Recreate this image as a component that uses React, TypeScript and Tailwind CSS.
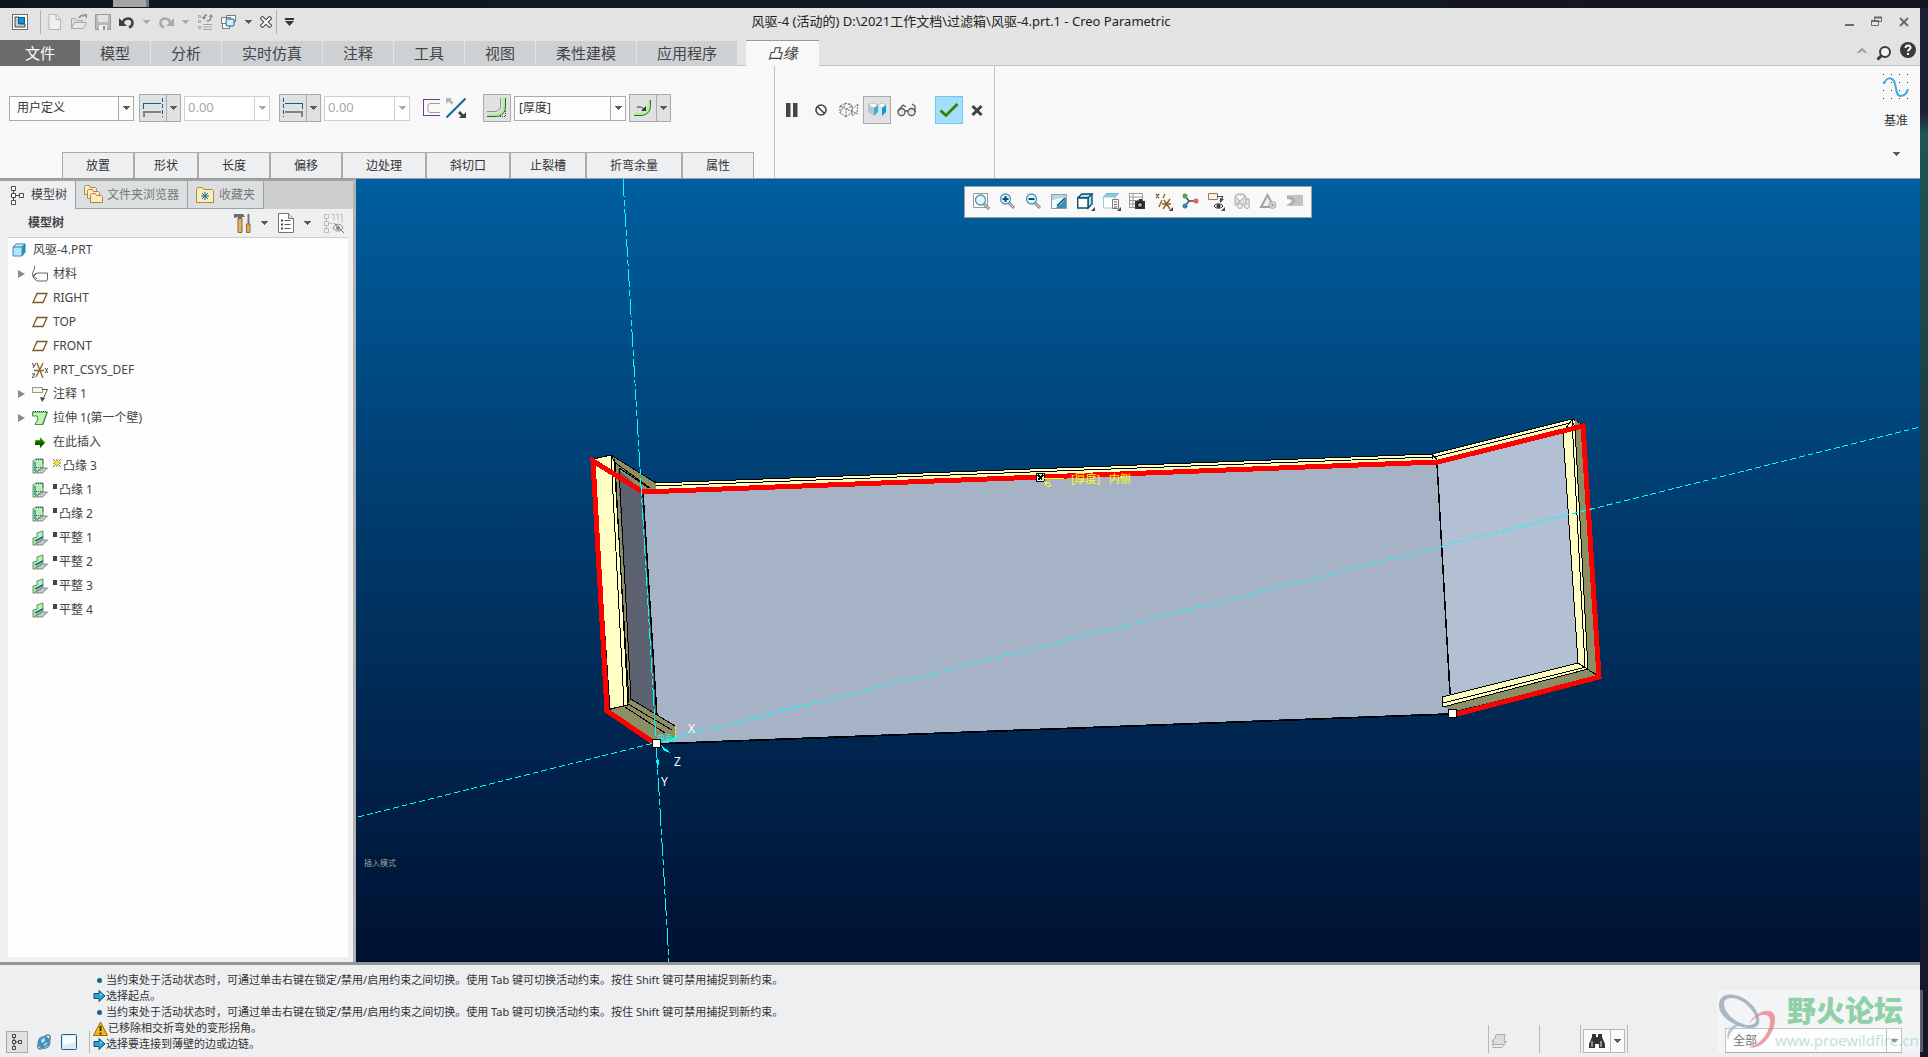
import { useState } from 'react'
import type { ReactNode } from 'react'

type No = {
  nome: string
  icone: ReactNode
  filho?: boolean
  expande?: boolean
  marca?: 'novo' | 'quadrado'
}

function Seta({ className = 'text-[#5a5a5a]' }: { className?: string }) {
  return (
    <svg width="7" height="4" viewBox="0 0 7 4" className={className} shapeRendering="crispEdges">
      <path d="M0 0h7L3.5 4z" fill="currentColor" />
    </svg>
  )
}

function Icone({ children, w = 16, h = 16 }: { children: ReactNode; w?: number; h?: number }) {
  return (
    <svg width={w} height={h} viewBox={`0 0 ${w} ${h}`} fill="none" className="shrink-0">
      {children}
    </svg>
  )
}

/* Quick access icons */
const IconeApp = () => (
  <Icone>
    <rect x="0.5" y="0.5" width="15" height="15" fill="#fff" stroke="#6d6d6d" />
    <path d="M3 3h4v7h6v3H3z" fill="#c8ccd0" stroke="#444" />
    <rect x="6.5" y="3.5" width="6" height="6" fill="#0096e0" stroke="#0f5f8e" />
  </Icone>
)
const IconeNovo = () => (
  <Icone>
    <path d="M2 .5h7l4.500 5V15.500H2z" fill="#efefef" stroke="#b5b5b5" />
    <path d="M9 .5v5h4.500" stroke="#b5b5b5" />
  </Icone>
)
const IconeAbrir = () => (
  <Icone>
    <path d="M.5 14.500V4.500h4l1 2h6v3" fill="#dcdcdc" stroke="#a8a8a8" />
    <path d="M.5 14.500l3-6h12l-3 6z" fill="#e8e8e8" stroke="#a8a8a8" />
    <path d="M8 4c1-2 3-3 5-2" stroke="#999" strokeWidth="2" />
    <path d="M12 0h4v5z" fill="#999" />
  </Icone>
)
const IconeSalvar = () => (
  <Icone>
    <path d="M.5 .5h15v15h-15z" fill="#b9b9b9" stroke="#9b9b9b" />
    <path d="M3 1h10v7H3z" fill="#e2e2e2" />
    <path d="M4 11h8v5H4z" fill="#efefef" />
    <path d="M8 12h2v4H8z" fill="#8f8f8f" />
  </Icone>
)
const IconeDesfazer = () => (
  <Icone>
    <path d="M3.500 9.500C5 3 13.500 3 13.500 9c0 2-1 3.500-3.500 4.500" stroke="#3d3f44" strokeWidth="2.600" />
    <path d="M0 4v8h8z" fill="#3d3f44" />
  </Icone>
)
const IconeRefazer = () => (
  <Icone>
    <path d="M12.500 9.500C11 3 2.500 3 2.500 9c0 2 1 3.500 3.500 4.500" stroke="#a9a9a9" strokeWidth="2.600" />
    <path d="M16 4v8H8z" fill="#a9a9a9" />
  </Icone>
)
const IconeRegenerar = () => (
  <Icone>
    <path d="M1.500 1.500h2v2h-2zM1.500 6.500h2v2h-2zM1.500 12.500h2v2h-2zM6 10.500h9M6 13h9M6 15.500h9" stroke="#a5a5a5" />
    <path d="M7 4c0-2 1-3 3-3M14 2c0 3-1 5-4 5" stroke="#8b8b8b" strokeWidth="1.500" />
    <path d="M4.500 3h5L7 6zM11.500 3h5L14 0z" fill="#8b8b8b" />
  </Icone>
)
const IconeJanelas = () => (
  <Icone>
    <path d="M5.500 1.500h9v6h-9zM.5 3.500h9v6h-9zM1.500 9.500h7v5h-7z" fill="#fff" stroke="#777" />
    <rect x="5" y="5" width="8" height="7" rx="1" fill="#cdeefa" stroke="#16647f" />
  </Icone>
)
const IconeFechar = () => (
  <Icone w={12} h={12}>
    <path d="M2.500 2.500l7 7M9.500 2.500l-7 7" stroke="#444" strokeWidth="4.200" strokeLinecap="square" />
    <path d="M2.500 2.500l7 7M9.500 2.500l-7 7" stroke="#fff" strokeWidth="2.200" strokeLinecap="square" />
  </Icone>
)

/* Feature dashboard icons */
const IconeExtremo = ({ espelhado = false }: { espelhado?: boolean }) => (
  <Icone w={22} h={22}>
    <g transform={espelhado ? 'translate(22 0) scale(-1 1)' : undefined} shapeRendering="crispEdges">
      <path d="M1.500 12V6.500H19" stroke="#0e6285" />
      <path d="M20.500 1v19" stroke="#0e6285" strokeDasharray="4 2" />
      <path d="M2 20v-5.500h17" stroke="#808285" strokeWidth="2" />
    </g>
  </Icone>
)
const IconePerfil = () => (
  <Icone w={18} h={18}>
    <path d="M17 .5H.5v16H17" stroke="#6f3f98" shapeRendering="crispEdges" />
    <path d="M17 4.500H7l-2 1v7l2 1h10" stroke="#a0a0a0" />
  </Icone>
)
const IconeInverter = () => (
  <Icone w={20} h={20}>
    <path d="M.5 19.500L19.500.5" stroke="#126a8e" strokeWidth="2" />
    <path d="M0 0h6L4.500 1.500l3 3-2 2-3-3L0 6z" fill="#b4b4b4" />
    <path d="M20 20h-7l2-2-3-3 2-2 3.500 3.500L20 14z" fill="#3f4145" />
  </Icone>
)
const IconeDobra = () => (
  <Icone w={20} h={20}>
    <path d="M0 17h8c6 0 9-3 9-9V0" stroke="#b7e8a6" strokeWidth="3" />
    <path d="M0 18.500h8c7 0 10.500-4 10.500-10.500V0" stroke="#24720f" />
    <path d="M0 13.500h7c4 0 6.500-2 6.500-6V0" stroke="#8c8c8c" />
    <path d="M13 18.500h6M18.500 13v6" stroke="#0e4a78" strokeDasharray="1 1" />
  </Icone>
)
const IconeRaio = () => (
  <Icone w={18} h={18}>
    <path d="M0 15h6c6 0 9-3 9-9V1" stroke="#b7e8a6" strokeWidth="3" />
    <path d="M0 16.500h6c7 0 10.500-4 10.500-10V1" stroke="#24720f" />
    <path d="M3 8h4l4 3" stroke="#333" />
    <path d="M12 7v5H7z" fill="#333" />
  </Icone>
)
const IconeArame = () => (
  <Icone w={20} h={16}>
    <path d="M1 4l6-3 6 3-5 3zM1 4v7l6 4V7M13 4v6l-6 5M19 2l-6 5v7l5-4zM7 1L1 11M10 1l4 5M19 12L7 7" stroke="#6b6b6b" strokeDasharray="2 1" />
  </Icone>
)
const IconeBlocos = () => (
  <Icone w={20} h={16}>
    <path d="M1 3l5-2 5 2-4 3z" fill="#fff" stroke="#999" strokeWidth=".5" />
    <path d="M1 3l6 3v8l-6-4z" fill="#b5c8d2" />
    <path d="M7 6l4-3v7l-4 4z" fill="#35aee2" />
    <path d="M11 3l4-2 4 2-4 3z" fill="#fff" stroke="#999" strokeWidth=".5" />
    <path d="M11 3l4 3v8l-4-4z" fill="#d8e4ea" />
    <path d="M15 6l4-3v7l-4 4z" fill="#0f9ad6" />
  </Icone>
)
const IconeOculos = () => (
  <Icone w={20} h={14}>
    <circle cx="4.500" cy="9" r="3.500" fill="#e3edf1" stroke="#55585c" strokeWidth="1.300" />
    <circle cx="14.500" cy="9" r="3.500" fill="#e3edf1" stroke="#55585c" strokeWidth="1.300" />
    <path d="M8 8.500c1-1 2-1 3 0M1 8l5-6 3 2M18 9V3l-3-2" stroke="#55585c" strokeWidth="1.300" />
  </Icone>
)
const IconeCurva = () => (
  <Icone w={26} h={26}>
    {[0, 8, 16, 24].map((y) => (
      <path key={y} d={`M0 ${y + 0.5}h26`} stroke="#333" strokeDasharray="1 7" shapeRendering="crispEdges" />
    ))}
    <path d="M1 10c2-7 9-8 11 0 2 7 1 11 5 12 4 0 7-3 8-7" stroke="#3fa9dc" strokeWidth="2" />
  </Icone>
)

/* Model tree icons */
const IconeArvore = () => (
  <Icone w={14} h={20}>
    <path d="M.5 1.500h4v4h-4zM.5 8.500h4v4h-4zM.5 15.500h4v4h-4zM8.500 8.500h4v4h-4z" fill="#fff" stroke="#4a4a4a" />
    <path d="M2.500 5.500v3M2.500 12.500v3M4.500 10.500h4" stroke="#4a4a4a" />
  </Icone>
)
const IconePastas = () => (
  <Icone w={20} h={20}>
    {[[0, 0], [3, 4], [6, 8]].map(([x, y]) => (
      <path key={x} d={`M${x + 0.5} ${y + 9.5}v-8l1-1h4l1 2h5l1 1v6z`} fill="#fdebc0" stroke="#b08847" />
    ))}
  </Icone>
)
const IconeFavoritos = () => (
  <Icone w={18} h={16}>
    <path d="M.5 15.500v-13l1-2h5l1 2h9l1 1v12z" fill="#fdebc0" stroke="#b08847" />
    <path d="M9 5v8M5 9h8M6 6l6 6M12 6l-6 6" stroke="#0a6a94" />
  </Icone>
)
const IconePeca = () => (
  <Icone w={14} h={14}>
    <path d="M1 4l3-3h9l-3 3z" fill="#d9f6ff" stroke="#287fa3" />
    <path d="M10 4l3-3v8l-3 4z" fill="#1c94c9" stroke="#287fa3" />
    <path d="M1 4h9v9H1z" fill="#aee6fa" stroke="#3b93b5" />
  </Icone>
)
const IconeMaterial = () => (
  <Icone>
    <path d="M2.500 0c1 3-2 5-2 8 0 4 3 6 5 7h9l1-2V7H5L2 10" stroke="#666" />
    <path d="M4 7l-3 3 4 3" stroke="#666" />
  </Icone>
)
const IconePlano = () => (
  <Icone>
    <path d="M5 3.500h10l-4 9H1z" fill="#fffdf4" stroke="#76592a" strokeWidth="1.300" />
  </Icone>
)
const IconeCsys = () => (
  <Icone>
    <path d="M2 8.500h10M5 1l6 15M11 1L4 15" stroke="#8f6b2d" strokeWidth="1.400" />
    <path d="M0 1l2 3M4 1L1 6M0 12h3l-3 4h3M13 6l3 5M16 6l-3 5" stroke="#444" />
  </Icone>
)
const IconeNota = () => (
  <Icone>
    <path d="M.5 1.500h10v5H.5z" fill="#fff3d9" stroke="#979797" />
    <path d="M10 3.500h5.500L11 13" stroke="#555" />
    <path d="M8 11l5 1-3 4z" fill="#444" />
  </Icone>
)
const IconeParede = () => (
  <Icone>
    <path d="M.5 2h15l-4.500 12.500H3L6 9l-1-3H.5z" fill="#bff2ac" stroke="#4a8a42" />
    <path d="M1 1.500h14M15 2l-4.500 12" stroke="#0e4a78" strokeDasharray="1 1" />
  </Icone>
)
const IconeInserir = () => (
  <Icone>
    <path d="M3 6h5V3l5 5.500L8 14v-3H3z" fill="#067a0b" stroke="#d8ee3a" strokeWidth=".6" />
    <path d="M3 8.500h10L8 14v-3H3z" fill="#155011" />
  </Icone>
)
const IconeFlange = () => (
  <Icone>
    <path d="M1 3l3-2h7v9l-7 3-1 2H1z" fill="#b9efb0" stroke="#5e9166" />
    <path d="M3 4v9" stroke="#3386ae" strokeWidth="1.500" />
    <path d="M4 1.500h7v4M4 9.500h7" stroke="#0e4a78" strokeDasharray="1 1" />
    <path d="M4 14l7-4h4.500l-5 5H4z" fill="#c9c9c9" stroke="#858585" />
  </Icone>
)
const IconePlana = () => (
  <Icone>
    <path d="M1 8l4-1V3l6-2v8l-7 4-1 2H1z" fill="#b9efb0" stroke="#5e9166" />
    <path d="M3 11l8-4" stroke="#14618c" strokeWidth="1.400" />
    <path d="M4 14l7-4h4.500l-5 5H4z" fill="#c9c9c9" stroke="#858585" />
  </Icone>
)
const IconeFerramentas = () => (
  <Icone w={18} h={20}>
    <path d="M4 5h4v14.500H4z" fill="#e3b066" stroke="#8c6932" />
    <path d="M0 1h9l2 3H8v2H4V4L0 5z" fill="#6a6d71" />
    <path d="M14.500 1v10" stroke="#777" strokeWidth="2" />
    <path d="M12.500 11h3.500v8.500h-3.500z" fill="#e3b066" stroke="#8c6932" />
  </Icone>
)
const IconeLista = () => (
  <Icone w={18} h={20}>
    <path d="M1.500.5h10l5 5v14h-15z" fill="#fff" stroke="#777" />
    <path d="M11.500.5v5h5" fill="#ddd" stroke="#777" />
    <path d="M4 7.500h2M4 11.500h2M4 15.500h2" stroke="#444" strokeWidth="2" />
    <path d="M7.500 7.500h6M7.500 11.500h6M7.500 15.500h6" stroke="#557" />
  </Icone>
)
const IconeOcultar = () => (
  <Icone w={20} h={20}>
    <path d="M.5 1.500h4v4h-4zM.5 8.500h4v4h-4zM.5 15.500h4v4h-4zM2.500 5.500v3M2.500 12.500v3M4.500 10.500h4M7 1.500h3v6M12 1.500h2v6M16 1.500h2v8" stroke="#bcbcbc" />
    <path d="M9 15c3-5 8-5 10 0-3 4-7 4-10 0z" fill="#eee" stroke="#8b8b8b" />
    <circle cx="14" cy="15" r="2" fill="#8b8b8b" />
    <path d="M10 10l10 10" stroke="#777" />
  </Icone>
)

const Canto = () => <path d="M18 14v4h-4z" fill="#444" />

const LupaBase = ({ sinal }: { sinal?: string }) => (
  <>
    <path d="M10 10l5 5" stroke="#8a8a8a" strokeWidth="3" />
    <path d="M10.500 10.500l4 4" stroke="#e6e6e6" />
    <circle cx="6.500" cy="6" r="5" fill="#e4f5fb" stroke="#4c98b8" strokeWidth="1.300" />
    {sinal && <path d={sinal} stroke="#0b4f76" strokeWidth="2" />}
  </>
)

const ferramentasVista: { nome: string; desenho: ReactNode }[] = [
  { nome: '重新调整', desenho: <><path d="M.5.5h14v14H.5z" fill="#fff" stroke="#999" /><g transform="translate(1 1)"><LupaBase /></g></> },
  { nome: '放大', desenho: <LupaBase sinal="M3.500 6h6M6.500 3v6" /> },
  { nome: '缩小', desenho: <LupaBase sinal="M3.500 6h6" /> },
  { nome: '重画', desenho: <><path d="M.5 1.500h15v14H.5z" fill="#fdfefe" stroke="#999" /><path d="M1 2h14v3C9 6 8 10 4 15H1V7z" fill="#a9dcef" /><path d="M15 5v10H4l6-4z" fill="#3a8fb5" /><path d="M1 15h4L14 5C9 5 3 6 1 8z" fill="#f4fbfe" /><path d="M6 13l8-8" stroke="#0c4463" strokeWidth="1.500" /></> },
  { nome: '显示样式', desenho: <><path d="M.7 5l4-4H15l-4 4zM11 5l4-4v10l-4 4z" fill="#a9e2f4" stroke="#0b4f6e" strokeWidth="1.400" /><path d="M.7 5H11v10H.7z" fill="#fff" stroke="#0b4f6e" strokeWidth="1.400" /><Canto /></> },
  { nome: '已保存方向', desenho: <><path d="M.5 4l3-3.500h12L12 4z" fill="#7fcdea" stroke="#77b8cf" /><path d="M.5 4H12v11H.5z" fill="#fff" stroke="#a2c6d3" /><path d="M9.500 6.500h6v9h-6z" fill="#fff" stroke="#777" /><path d="M11 9h3M11 11.500h3M11 14h3" stroke="#555" /><Canto /></> },
  { nome: '视图管理器', desenho: <><path d="M.5.5h13v14H.5zM.5 4h13M.5 7.500h13M.5 11h13M4 0v14" fill="#fff" stroke="#999" /><path d="M6 8h3l1-2h3l1 2h2v8H6z" fill="#333" /><circle cx="11" cy="12" r="2.500" fill="#aaa" stroke="#000" /></> },
  { nome: '基准显示过滤器', desenho: <><path d="M1 1l3 4M4 1L1 5M10 1L8 5M7 7L4 14M7 11h9M9 7l6 9M15 6L8 16" stroke="#8a6423" strokeWidth="1.400" /><Canto /></> },
  { nome: '旋转中心', desenho: <><path d="M4 3l4 5M4 13l4-5M8 8h6" stroke="#444" strokeWidth="1.300" /><circle cx="4" cy="3" r="2.500" fill="#4ea15d" /><circle cx="4" cy="13" r="2.500" fill="#3186b2" /><circle cx="15" cy="8" r="2.500" fill="#e0605c" /></> },
  { nome: '注释显示', desenho: <><path d="M1.500.5h9v6h-9z" fill="#fff3d9" stroke="#8b7d63" /><path d="M10 3.500h6L13 8" stroke="#444" /><path d="M13 5l4 1-4 4z" fill="#444" /><path d="M7 13c2-3 7-3 9 0-2 3-7 3-9 0z" fill="#fff" stroke="#333" /><circle cx="11.500" cy="13" r="2" fill="#333" /><Canto /></> },
  { nome: '模拟查看', desenho: <><path d="M2 3l3-2h6l2 3v8H2zM2 3l5 5 5-5M4 11l3-3M13 6h3v6" fill="#ddd" stroke="#aaa" /><circle cx="7" cy="13" r="2.500" fill="#eee" stroke="#aaa" /><circle cx="14" cy="13" r="2.500" fill="#eee" stroke="#aaa" /></> },
  { nome: '分析显示', desenho: <><path d="M8.500 2L2 14h13z" fill="#eee" stroke="#a3a3a3" strokeWidth="2" /><circle cx="13.500" cy="12" r="3.500" fill="#ddd" stroke="#aaa" /><path d="M12.500 10v4l3-2z" fill="#999" /></> },
  { nome: '停止', desenho: <><path d="M2 2h16v11H2v-2c5 1 6-5 0-5z" fill="#c3c3c3" /><path d="M2 5c9-1 9 6 2 6" stroke="#a7a7a7" strokeWidth="2" /></> },
]

const abas = ['模型', '分析', '实时仿真', '注释', '工具', '视图', '柔性建模', '应用程序']

const subAbas = [
  { nome: '放置', classe: 'w-[72px]' },
  { nome: '形状', classe: 'w-16' },
  { nome: '长度', classe: 'w-[72px]' },
  { nome: '偏移', classe: 'w-[72px]' },
  { nome: '边处理', classe: 'w-[84px]' },
  { nome: '斜切口', classe: 'w-[84px]' },
  { nome: '止裂槽', classe: 'w-[76px]' },
  { nome: '折弯余量', classe: 'w-24' },
  { nome: '属性', classe: 'w-[72px]' },
]

const nos: No[] = [
  { nome: '风驱-4.PRT', icone: <IconePeca /> },
  { nome: '材料', icone: <IconeMaterial />, filho: true, expande: true },
  { nome: 'RIGHT', icone: <IconePlano />, filho: true },
  { nome: 'TOP', icone: <IconePlano />, filho: true },
  { nome: 'FRONT', icone: <IconePlano />, filho: true },
  { nome: 'PRT_CSYS_DEF', icone: <IconeCsys />, filho: true },
  { nome: '注释 1', icone: <IconeNota />, filho: true, expande: true },
  { nome: '拉伸 1(第一个壁)', icone: <IconeParede />, filho: true, expande: true },
  { nome: '在此插入', icone: <IconeInserir />, filho: true },
  { nome: '凸缘 3', icone: <IconeFlange />, filho: true, marca: 'novo' },
  { nome: '凸缘 1', icone: <IconeFlange />, filho: true, marca: 'quadrado' },
  { nome: '凸缘 2', icone: <IconeFlange />, filho: true, marca: 'quadrado' },
  { nome: '平整 1', icone: <IconePlana />, filho: true, marca: 'quadrado' },
  { nome: '平整 2', icone: <IconePlana />, filho: true, marca: 'quadrado' },
  { nome: '平整 3', icone: <IconePlana />, filho: true, marca: 'quadrado' },
  { nome: '平整 4', icone: <IconePlana />, filho: true, marca: 'quadrado' },
]

const dica = '当约束处于活动状态时，可通过单击右键在锁定/禁用/启用约束之间切换。使用 Tab 键可切换活动约束。按住 Shift 键可禁用捕捉到新约束。'

const mensagens: { tipo: 'info' | 'acao' | 'aviso'; texto: string }[] = [
  { tipo: 'info', texto: dica },
  { tipo: 'acao', texto: '选择起点。' },
  { tipo: 'info', texto: dica },
  { tipo: 'aviso', texto: '已移除相交折弯处的变形拐角。' },
  { tipo: 'acao', texto: '选择要连接到薄壁的边或边链。' },
]

function BarraTitulo() {
  return (
    <header className="flex h-8 items-center pb-1">
      <div className="flex flex-1 items-center pl-3">
        <button aria-label="Creo"><IconeApp /></button>
        <span className="mr-[6px] ml-3 h-6 w-px bg-[#b0b0b0]" />
        <div className="flex items-center gap-2">
          <button aria-label="新建"><IconeNovo /></button>
          <button aria-label="打开"><IconeAbrir /></button>
          <button aria-label="保存"><IconeSalvar /></button>
          <button aria-label="撤消"><IconeDesfazer /></button>
          <button aria-label="撤消列表"><Seta className="text-[#a9a9a9]" /></button>
          <button aria-label="重做"><IconeRefazer /></button>
          <button aria-label="重做列表"><Seta className="text-[#a9a9a9]" /></button>
          <button aria-label="重新生成"><IconeRegenerar /></button>
          <button aria-label="窗口"><IconeJanelas /></button>
          <button aria-label="窗口列表"><Seta /></button>
        </div>
        <button aria-label="关闭窗口" className="ml-2"><IconeFechar /></button>
        <span className="mx-1 h-6 w-px bg-[#b0b0b0]" />
        <button aria-label="自定义快速访问工具栏" className="ml-1">
          <Icone w={9} h={8}>
            <path d="M0 1h9" stroke="#333" strokeWidth="2" />
            <path d="M0 3h9L4.500 8z" fill="#333" />
          </Icone>
        </button>
      </div>
      <h1 className="text-[13px] text-[#222]">风驱-4 (活动的) D:\2021工作文档\过滤箱\风驱-4.prt.1 - Creo Parametric</h1>
      <div className="flex flex-1 items-center justify-end gap-[15px] pr-[10px]">
        <button aria-label="最小化">
          <Icone w={12} h={12}><path d="M1 9h9" stroke="#6b6b6b" strokeWidth="2" /></Icone>
        </button>
        <button aria-label="还原">
          <Icone w={12} h={12}>
            <path d="M3.500 4V1.500h7v4H8M.500 4.500h7v5H.500z" stroke="#6b6b6b" />
            <path d="M3 1.500h8M0 5h8" stroke="#6b6b6b" strokeWidth="2" />
          </Icone>
        </button>
        <button aria-label="关闭">
          <Icone w={12} h={12}><path d="M2 2l8 8M10 2l-8 8" stroke="#6b6b6b" strokeWidth="2" /></Icone>
        </button>
      </div>
    </header>
  )
}

function BarraAbas() {
  return (
    <nav className="flex h-[26px] items-stretch border-b border-[#c0c2c4] text-[15px] leading-[22px] text-[#444]">
      <button className="-mb-px w-20 bg-[#6b6b6b] pb-px text-white">文件</button>
      <div className="-mb-px flex gap-px pt-px">
        {abas.map((aba) => (
          <button key={aba} className="bg-[#cdd1d4] px-5 pb-[2px]">{aba}</button>
        ))}
      </div>
      <button className="-mb-px ml-[9px] w-[73px] border-t border-[#999] bg-[#f8f8f8] pb-[2px] italic">凸缘</button>
      <div className="ml-auto flex items-center gap-2 pr-1">
        <button aria-label="最小化功能区">
          <Icone w={12} h={12}><path d="M.500 6L6 .5 11.500 6h-3L6 4 3.500 6z" fill="#a5a5a5" /></Icone>
        </button>
        <button aria-label="命令搜索">
          <Icone>
            <circle cx="9" cy="7" r="5" fill="#eef4f8" stroke="#3a3a3a" strokeWidth="2" />
            <path d="M6 10l-4.500 4.500" stroke="#3a3a3a" strokeWidth="3" />
          </Icone>
        </button>
        <button aria-label="帮助" className="pb-[6px]">
          <Icone>
            <circle cx="8" cy="8" r="8" fill="#3a3a3a" />
            <path d="M5.500 6c0-3.500 5.500-3 5 0-.300 1.500-2.500 1.700-2.500 3.500M8 11v2" stroke="#fff" strokeWidth="2" />
          </Icone>
        </button>
      </div>
    </nav>
  )
}

function Combo({ rotulo, opcao, className }: { rotulo: string; opcao: string; className: string }) {
  return (
    <div className={`grid h-[25px] border border-[#aaa] bg-[#fdfdfd] ${className}`}>
      <select aria-label={rotulo} className="col-start-1 row-start-1 w-full appearance-none pr-4 leading-[22px] outline-none">
        <option>{opcao}</option>
      </select>
      <span className="pointer-events-none col-start-1 row-start-1 flex w-[15px] items-center justify-center justify-self-end border-l border-[#aaa]">
        <Seta />
      </span>
    </div>
  )
}

function BotaoDividido({ rotulo, children }: { rotulo: string; children: ReactNode }) {
  return (
    <div className="flex h-7 w-[42px] border border-[#aaa] bg-[#dfe1e3]">
      <button aria-label={rotulo} className="flex flex-1 items-center justify-center">{children}</button>
      <button aria-label={`${rotulo}选项`} className="flex w-[14px] items-center justify-center border-l border-[#aaa]"><Seta /></button>
    </div>
  )
}

function CampoValor({ rotulo }: { rotulo: string }) {
  const [valor, setValor] = useState('0.00')
  return (
    <div className="flex h-[25px] w-[86px] border border-[#cfcfcf] bg-white">
      <input
        aria-label={rotulo}
        value={valor}
        onChange={(e) => setValor(e.target.value)}
        className="w-0 flex-1 px-[3px] text-[13px] text-[#a8a8a8] outline-none"
      />
      <button aria-label={`${rotulo}列表`} className="flex w-[15px] items-center justify-center border-l border-[#cfcfcf]">
        <Seta className="text-[#aaa]" />
      </button>
    </div>
  )
}

function Painel() {
  return (
    <section className="flex h-[113px] border-b border-[#9a9a9a] bg-[#f8f8f8] text-xs text-[#333]">
      <div className="flex w-[775px] flex-col justify-between border-r border-[#c0c2c4]">
        <div className="mt-7 ml-[9px] flex items-center">
          <Combo rotulo="形状类型" opcao="用户定义" className="w-[125px] [&_select]:pl-[7px]" />
          <div className="ml-[5px] flex items-center gap-[3px]">
            <BotaoDividido rotulo="第一方向长度"><IconeExtremo /></BotaoDividido>
            <CampoValor rotulo="第一方向长度值" />
          </div>
          <div className="ml-[9px] flex items-center gap-[3px]">
            <BotaoDividido rotulo="第二方向长度"><IconeExtremo espelhado /></BotaoDividido>
            <CampoValor rotulo="第二方向长度值" />
          </div>
          <button aria-label="形状" className="ml-[13px]"><IconePerfil /></button>
          <button aria-label="更改厚度侧" className="ml-[5px]"><IconeInverter /></button>
          <button aria-label="内侧折弯" className="ml-[17px] flex size-7 items-center justify-center border border-[#aaa] bg-[#dfe1e3]">
            <IconeDobra />
          </button>
          <div className="ml-[3px] flex items-center gap-[3px]">
            <Combo rotulo="折弯半径" opcao="[厚度]" className="w-28 [&_select]:pl-1" />
            <BotaoDividido rotulo="半径位置"><IconeRaio /></BotaoDividido>
          </div>
        </div>
        <div className="ml-[62px] flex h-[26px]">
          {subAbas.map((aba) => (
            <button key={aba.nome} className={`border border-b-0 border-[#aaa] bg-[#eeeff1] ${aba.classe}`}>{aba.nome}</button>
          ))}
        </div>
      </div>

      <div className="flex w-[220px] items-start border-r border-[#c0c2c4] pt-[30px] pl-[11px]">
        <div className="flex h-7 items-center">
          <button aria-label="暂停">
            <Icone w={12} h={14}><path d="M0 0h4.500v14H0zM7 0h4.500v14H7z" fill="#444" /></Icone>
          </button>
          <button aria-label="无预览" className="ml-[17px]">
            <Icone w={12} h={12}>
              <circle cx="6" cy="6" r="5" stroke="#444" strokeWidth="1.600" />
              <path d="M2.500 2.500l7 7" stroke="#444" strokeWidth="1.600" />
            </Icone>
          </button>
          <button aria-label="未连接预览" className="ml-3"><IconeArame /></button>
          <button aria-label="连接预览" className="ml-1 flex size-7 items-center justify-center border border-[#aaa] bg-[#dfe1e3]">
            <IconeBlocos />
          </button>
          <button aria-label="验证" className="ml-[6px]"><IconeOculos /></button>
          <button aria-label="确定" className="ml-[18px] flex size-7 items-center justify-center border border-[#6cc6f5] bg-[#a3dffc]">
            <Icone w={20} h={16}>
              <path d="M1.500 8.500l5.500 5L18.500 2" stroke="#c6e23a" strokeWidth="4" />
              <path d="M1.500 8.500l5.500 5L18.500 2" stroke="#1d7d49" strokeWidth="2.600" />
            </Icone>
          </button>
          <button aria-label="取消" className="ml-2">
            <Icone w={12} h={12}><path d="M1.500 2l9 9M10.500 2l-9 9" stroke="#3f4145" strokeWidth="3" /></Icone>
          </button>
        </div>
      </div>

      <button className="ml-auto flex w-12 flex-col items-center pt-2">
        <IconeCurva />
        <span className="mt-[13px] mb-[23px] leading-4">基准</span>
        <Seta />
      </button>
    </section>
  )
}

function Marca({ tipo }: { tipo: 'novo' | 'quadrado' }) {
  if (tipo === 'quadrado') {
    return <span className="mr-[2px] mb-2 h-[5px] w-1 bg-[#444]" />
  }
  return (
    <svg width="8" height="8" viewBox="0 0 8 8" className="mr-[2px] mb-[6px]">
      <path d="M0 0l8 8M8 0L0 8M4 0v8M0 4h8" stroke="#6b6500" strokeWidth=".9" />
      <circle cx="4" cy="4" r="2" fill="#ffee00" />
    </svg>
  )
}

function ArvoreModelo() {
  return (
    <aside className="flex w-[356px] shrink-0 flex-col border-r-[3px] border-[#b0b2b4] bg-[#eeeff1] text-xs text-[#444]">
      <div className="flex h-[30px] border-t-2 border-[#a0a2a4] bg-[#cdcfd1]">
        <button className="flex w-[75px] items-center gap-[6px] bg-[#eeeff1] pl-[11px]">
          <IconeArvore />模型树
        </button>
        <button className="flex w-[113px] items-center gap-[3px] border border-t-0 border-[#9fa1a3] bg-[#dcdfe0] pl-2 text-[#777]">
          <IconePastas />文件夹浏览器
        </button>
        <button className="flex w-[76px] items-center gap-[5px] border border-t-0 border-l-0 border-[#9fa1a3] bg-[#dcdfe0] pl-2 text-[#777]">
          <IconeFavoritos />收藏夹
        </button>
      </div>
      <div className="flex h-[28px] items-center pr-[9px] pl-7">
        <h2 className="font-bold">模型树</h2>
        <div className="ml-auto flex items-center gap-[9px]">
          <button aria-label="设置"><IconeFerramentas /></button>
          <button aria-label="设置列表"><Seta /></button>
          <button aria-label="显示"><IconeLista /></button>
          <button aria-label="显示列表"><Seta /></button>
          <button aria-label="隐藏" className="ml-1"><IconeOcultar /></button>
        </div>
      </div>
      <ul className="mr-[5px] mb-[5px] ml-2 flex-1 border-t border-[#cdcfd1] bg-[#fdfdfd]">
        {nos.map((no) => (
          <li key={no.nome} className={`flex h-6 items-center ${no.filho ? 'pl-[10px]' : 'pl-1'}`}>
            {no.filho && (
              <span className="w-[14px]">
                {no.expande && (
                  <button aria-label={`展开 ${no.nome}`} className="block">
                    <Icone w={7} h={8}><path d="M0 0l7 4-7 4z" fill="#8a8a8a" /></Icone>
                  </button>
                )}
              </span>
            )}
            {no.icone}
            <span className={`flex items-center ${no.filho ? 'ml-[5px]' : 'ml-[7px]'}`}>
              {no.marca && <Marca tipo={no.marca} />}
              {no.nome}
            </span>
          </li>
        ))}
      </ul>
    </aside>
  )
}

function Modelo() {
  return (
    <svg
      viewBox="356 179 1564 783"
      preserveAspectRatio="xMidYMid slice"
      className="absolute inset-0 h-full w-full"
      fill="none"
      shapeRendering="crispEdges"
    >
      {/* main wall and side walls */}
      <path d="M643 491L1437 461l14 252-795 30z" fill="#a6b2c5" />
      <path d="M1437 461l127-31 14 233-127 32z" fill="#b3c0d3" />
      <path d="M618 467l25 24 14 225-26-16z" fill="#5d6270" />
      <path d="M656 744l795-30" stroke="#000" strokeWidth="1.500" />
      <path d="M643 493l14 224M1437 463l13 231" stroke="#000" strokeWidth="1.500" />

      {/* left flange */}
      <path d="M611 455l45 28v8h-13l-25-22 13 230-7 6-13-250z" fill="#8c8f66" />
      <path d="M610 710l18-6 3-5 44 27v12l-19 6z" fill="#8c8f66" />
      <path d="M593 459l18-4 4 8 13 242-18 4z" fill="#ffffc4" stroke="#000" />
      <path d="M611 455l13 250M614 459l15 243M619 468l12 231M611 455l45 28M614 462l36 26M619 468l30 20M631 699l44 27M628 704l44 26M625 707l40 26" stroke="#000" />

      {/* top flange */}
      <path d="M656 483l776-29 6 8-782 29z" fill="#ffffc4" />
      <path d="M656 483l776-29M656 486l776-29" stroke="#000" />
      <path d="M1432 454l140-35 11 6-145 36z" fill="#ffffc4" stroke="#000" />
      <path d="M1434 457l136-34M1432 454v5" stroke="#000" />

      {/* right flange */}
      <path d="M1575 420l8 6 16 249-12-6z" fill="#8c8f66" />
      <path d="M1563 432l9-12 3 8 13 241-10-6z" fill="#ffffc4" stroke="#000" />
      <path d="M1572 420l13 247" stroke="#000" />
      <path d="M1443 707l145-38 11 7-144 35z" fill="#8c8f66" />
      <path d="M1442 697l136-34 10 6-145 38z" fill="#ffffc4" stroke="#000" />
      <path d="M1443 703l143-36M1578 663l20 13" stroke="#000" />

      {/* selected edge chain */}
      <path d="M653 742l-46-31-14-250 50 31 795-30 145-36 16 251-142 37" stroke="#f00" strokeWidth="5" />

      {/* datum axes */}
      <path d="M623 179L669 962" stroke="#0ff" strokeDasharray="18 3 6 3" />
      <path d="M358 817L1920 427" stroke="#0ff" strokeDasharray="6 3" />
      <path d="M675 727v11" stroke="#ff0" strokeDasharray="2 2" />
      <path d="M661 745l10 8-7-2zM656 760h3l-1 10zM670 739l12-3-9 5z" fill="#0ff" />
      <text x="657" y="741" fill="#0ff" fontSize="8">曲面</text>

      <path d="M652 739h8v8h-8zM1448 709h8v8h-8z" fill="#fff" stroke="#000" />

      <g fill="#fff" fontSize="12">
        <text x="688" y="733">X</text>
        <text x="674" y="766">Z</text>
        <text x="661" y="786">Y</text>
      </g>

      {/* thickness handle */}
      <path d="M1036.500 473.500h8v8h-8z" fill="#fff" stroke="#000" />
      <path d="M1038 475l5 5M1043 475l-5 5" stroke="#000" strokeWidth="1.500" />
      <path d="M1042 478h22M1042 479l4 4M1045 484l3-2 3 3-3 2z" stroke="#ff0" />
      <text x="1071" y="483" fill="#ff0" fontSize="11" className="whitespace-pre">[厚度]   内侧</text>

      <text x="364" y="866" fill="#a3a3a3" fontSize="8">插入模式</text>
    </svg>
  )
}

function AreaGrafica() {
  return (
    <main className="relative flex-1 bg-linear-to-b from-[#005f9f] to-[#001132]">
      <Modelo />
      <div className="relative mx-auto mt-[7px] flex h-8 w-fit items-center border border-[#a0a0a0] bg-[#f8f8f8] px-1">
        {ferramentasVista.map((f) => (
          <button key={f.nome} aria-label={f.nome} className="flex w-[26px] justify-center">
            <Icone w={18} h={18}>{f.desenho}</Icone>
          </button>
        ))}
      </div>
    </main>
  )
}

function IconeMensagem({ tipo }: { tipo: 'info' | 'acao' | 'aviso' }) {
  if (tipo === 'info') {
    return <span className="mx-1 size-[5px] rounded-full bg-[#14618c]" />
  }
  if (tipo === 'acao') {
    return (
      <Icone w={13} h={12}>
        <path d="M1 3.500h5v-3l6 5.500-6 5.500v-3H1z" fill="#2ba4d4" stroke="#0e4f74" />
        <path d="M2 5h5V3l2 2z" fill="#b6e6f7" />
      </Icone>
    )
  }
  return (
    <Icone w={15} h={15}>
      <path d="M7.500 1L14.500 14.500H.500z" fill="#f9b51c" stroke="#a06a00" />
      <path d="M7.500 5v5M7.500 11.500v2" stroke="#333" strokeWidth="2" />
    </Icone>
  )
}

function BarraEstado() {
  return (
    <footer className="flex h-[95px] shrink-0 border-t-[3px] border-[#939597] bg-[#eeeff1] text-xs text-[#333]">
      <div className="flex items-end gap-2 pb-1 pl-[6px]">
        <button aria-label="模型树" className="flex size-[22px] items-center justify-center border border-[#aaa] bg-[#dfe1e3]">
          <Icone w={12} h={16}>
            <path d="M1.500.5h3v3h-3zM1.500 6.500h3v3h-3zM1.500 12.500h3v3h-3zM7.500 6.500h3v3h-3zM3 4v2M3 10v2M5 8h2" stroke="#444" />
          </Icone>
        </button>
        <button aria-label="浏览器" className="mb-[3px]">
          <Icone>
            <circle cx="8" cy="8.500" r="6.500" fill="#2d9acb" />
            <path d="M4 5l4-2 1 4-3 2zM8 10l4-2-1 5-3 1z" fill="#bfe7f5" />
            <ellipse cx="8" cy="8" rx="8.500" ry="4" transform="rotate(-50 8 8)" stroke="#77828a" strokeWidth="1.500" />
          </Icone>
        </button>
        <button aria-label="全屏" className="mb-[3px] ml-px">
          <Icone>
            <rect x="0.5" y="0.5" width="15" height="15" rx="1" fill="#dcebf0" stroke="#16647f" />
            <path d="M2 2h12v6L2 12z" fill="#f7fbfc" />
          </Icone>
        </button>
        <span className="ml-1 h-[22px] w-px bg-[#b8b8b8]" />
      </div>
      <ul className="flex-1 pt-[7px] pl-[3px] text-[11px]">
        {mensagens.map((m, i) => (
          <li key={i} className="flex h-4 items-center whitespace-nowrap">
            <IconeMensagem tipo={m.tipo} />
            {m.texto}
          </li>
        ))}
      </ul>
      <div className="flex items-end pr-[18px] pb-1">
        <span className="h-7 w-px bg-[#b8b8b8]" />
        <button aria-label="几何" className="mb-1 ml-[2px]">
          <Icone>
            <path d="M5 1.500h9l-1 7h2.500l-3 3H1l2-3H1l2-3h1z" fill="#ddd" stroke="#a9a9a9" />
            <path d="M2 12.500v2h9l3-3" stroke="#a9a9a9" />
          </Icone>
        </button>
        <span className="ml-8 h-7 w-px bg-[#b8b8b8]" />
        <span className="ml-10 h-7 w-px bg-[#b8b8b8]" />
        <div className="ml-[2px] flex h-6 border border-[#b8b8b8] bg-[#fafafa]">
          <button aria-label="查找" className="flex w-[26px] items-center justify-center">
            <Icone>
              <path d="M3 1h4v3h2V1h4v3l3 7v4h-6v-4H6v4H0v-4l3-7z" fill="#333" />
              <path d="M2 8h2v6H2zM11 8h2v6h-2z" fill="#909090" />
            </Icone>
          </button>
          <button aria-label="查找选项" className="flex w-[14px] items-center justify-center border-l border-[#b8b8b8]"><Seta /></button>
        </div>
        <span className="ml-[2px] h-7 w-px bg-[#b8b8b8]" />
        <Combo rotulo="选择过滤器" opcao="全部" className="ml-[97px] w-[177px] [&_select]:pl-[7px]" />
      </div>
    </footer>
  )
}

function MarcaForum() {
  return (
    <div className="pointer-events-none absolute right-[5px] bottom-[5px] flex h-[62px] w-[206px] bg-white/30">
      <svg width="58" height="60" viewBox="0 0 58 60" fill="none" className="shrink-0">
        <path fillRule="evenodd" d="M2 14C3 0 24 2 36 16c11 14 7 24-6 22C16 36 1 26 2 14zm5 0c0 9 13 20 23 21 11 1 12-7 3-17C23 6 7 5 7 14z" fill="#8fa3b2" fillOpacity=".75" />
        <path d="M11 50c-3-9 5-19 18-16-10 0-16 7-18 16z" fill="#a9b6c2" fillOpacity=".8" />
        <path d="M32 34C39 20 56 16 58 27c1 14-12 34-27 30 12-1 23-16 22-27-1-8-12-7-21 4z" fill="#e57f86" fillOpacity=".75" />
      </svg>
      <div className="flex flex-col items-center">
        <span className="mr-1 h-9 text-[29px] leading-[42px] font-black text-[#8fd0a8]">野火论坛</span>
        <span className="mt-1 text-[15px] leading-5 text-[#8fd0c8]/60">www.proewildfire.cn</span>
      </div>
    </div>
  )
}

export default function App() {
  return (
    <div className="relative flex h-screen flex-col overflow-hidden bg-[#161a26] font-['Noto_Sans','Noto_Sans_CJK_SC',sans-serif]">
      <div className="h-2 shrink-0 bg-linear-to-r from-[#10151c] via-[#101a26] to-[#15131d] pl-[113px]">
        <div className="h-[7px] w-9 border-r-[3px] border-[#74777b] bg-[#a2a4a6]" />
      </div>
      <div className="flex min-h-0 flex-1">
        <div className="flex min-w-0 flex-1 flex-col bg-[#e3e3e3]">
          <BarraTitulo />
          <BarraAbas />
          <Painel />
          <div className="flex min-h-0 flex-1">
            <ArvoreModelo />
            <AreaGrafica />
          </div>
          <BarraEstado />
        </div>
        <div className="w-2 bg-linear-to-b from-[#1b2236] from-10% via-[#1f5552] via-12% to-[#14182a] to-90%" />
      </div>
      <MarcaForum />
    </div>
  )
}
